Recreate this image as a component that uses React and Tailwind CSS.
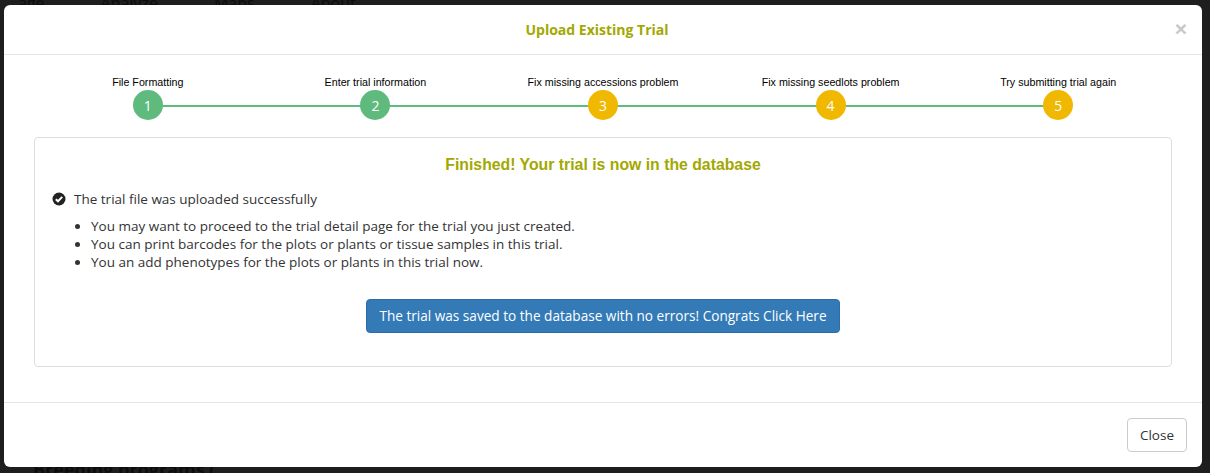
import React from 'react';

const steps = [
  { label: 'File Formatting', n: 1, done: true },
  { label: 'Enter trial information', n: 2, done: true },
  { label: 'Fix missing accessions problem', n: 3, done: false },
  { label: 'Fix missing seedlots problem', n: 4, done: false },
  { label: 'Try submitting trial again', n: 5, done: false },
];

const CheckCircle = () => (
  <svg width="14" height="14" viewBox="0 0 14 14">
    <circle cx="7" cy="7" r="6.5" fill="#222" />
    <path d="M3.8 7.2 L6 9.3 L10.2 4.9" stroke="#fff" strokeWidth="2" fill="none" />
  </svg>
);

const App = () => {
  return (
    <div className="relative w-[1210px] h-[473px] overflow-hidden bg-[#1e1e1e] flex flex-col" style={{ fontFamily: '"Open Sans", "Liberation Sans", sans-serif' }}>
      {/* page behind the backdrop */}
      <div className="flex gap-[56px] pl-[18px] -mt-[9px] text-[16px] text-[#0c0c0c]">
        <span>age</span>
        <span>Analyze</span>
        <span>Maps</span>
        <span>About</span>
      </div>
      <div className="mt-auto -mb-[10px] pl-[33px] text-[18px] font-bold text-[#0c0c0c]">Breeding programs (</div>

      {/* Modal */}
      <div className="absolute left-[4px] top-[5px] w-[1198px] h-[462px] bg-white rounded-[6px] flex flex-col">
        {/* Header */}
        <div className="relative h-[50px] border-b border-[#e5e5e5] flex items-center justify-center">
          <h4 className="mr-[12px] text-[14px] font-bold text-[#a2a800]">Upload Existing Trial</h4>
          <span className="absolute right-[15px] top-[13px] text-[21px] font-bold text-[#c8c8c8] leading-none" style={{ fontFamily: '"Liberation Sans", sans-serif' }}>×</span>
        </div>

        {/* Body */}
        <div className="flex-1 px-[30px] pt-[20px]">
          {/* Stepper */}
          <div className="relative grid grid-cols-5" style={{ fontFamily: '"Liberation Sans", sans-serif' }}>
            <div className="absolute left-[10%] right-[10%] top-[30px] h-[2px] bg-[#5fba7d]" />
            {steps.map((s) => (
              <div key={s.n} className="relative flex flex-col items-center">
                <div className="text-[10.7px] text-black leading-[14px]">{s.label}</div>
                <div
                  className={`mt-[1px] w-[30px] h-[30px] rounded-full flex items-center justify-center text-[14px] text-white ${s.done ? 'bg-[#5fba7d]' : 'bg-[#f0b800]'}`}
                  style={{ fontFamily: '"Open Sans", sans-serif' }}
                >
                  {s.n}
                </div>
              </div>
            ))}
          </div>

          {/* Panel */}
          <div className="mt-[17px] h-[230px] border border-[#dddddd] rounded-[4px] px-[17px] pt-[17px]">
            <h4 className="text-center text-[15.8px] font-bold text-[#a2a800] leading-[20px]" style={{ fontFamily: '"Liberation Sans", sans-serif' }}>
              Finished! Your trial is now in the database
            </h4>
            <div className="mt-[14px] flex items-center gap-[8px] text-[13.5px] text-[#333]">
              <CheckCircle />
              <span>The trial file was uploaded successfully</span>
            </div>
            <ul className="mt-[8px] pl-[39px] list-disc text-[13.5px] leading-[18px] text-[#333]">
              <li>You may want to proceed to the trial detail page for the trial you just created.</li>
              <li>You can print barcodes for the plots or plants or tissue samples in this trial.</li>
              <li>You an add phenotypes for the plots or plants in this trial now.</li>
            </ul>
            <div className="mt-[28px] flex justify-center">
              <button className="h-[34px] px-[12px] rounded-[4px] bg-[#337ab7] border border-[#2e6da4] text-white text-[13.6px]">
                The trial was saved to the database with no errors! Congrats Click Here
              </button>
            </div>
          </div>
        </div>

        {/* Footer */}
        <div className="h-[65px] border-t border-[#e5e5e5] flex items-center justify-end pr-[15px]">
          <button className="h-[34px] px-[12px] rounded-[4px] border border-[#cccccc] bg-white text-[13.5px] text-[#333]">
            Close
          </button>
        </div>
      </div>
    </div>
  );
};

export default App;
